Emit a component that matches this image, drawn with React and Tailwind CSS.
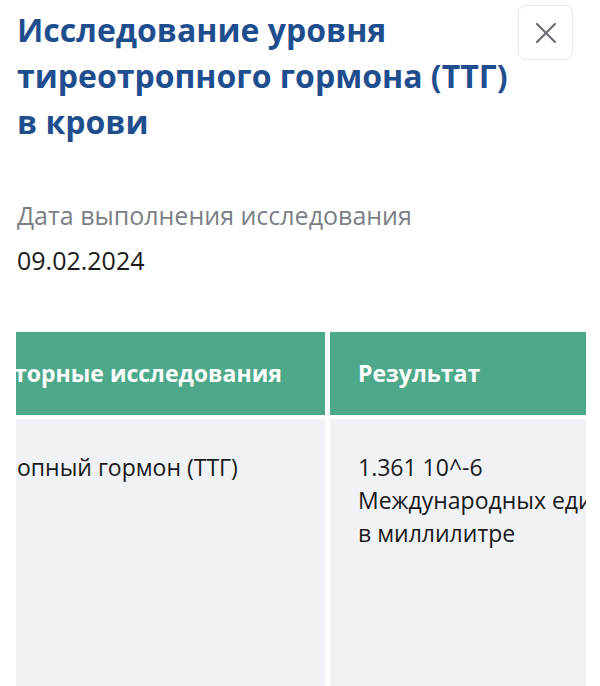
import React from 'react';

const App = () => {
  return (
    <div className="min-h-screen bg-white pl-4 pr-[14px] pt-[7px] overflow-hidden" style={{ fontFamily: '"Open Sans", sans-serif' }}>
      <div className="flex items-start justify-between">
        <h1 className="text-[32px] leading-[46px] font-bold text-[#1f4e8f] pl-px">
          Исследование уровня<br />тиреотропного гормона (ТТГ)<br />в крови
        </h1>
        <button className="w-[55px] h-[55px] -mt-[2px] mr-[13px] shrink-0 rounded-lg border border-gray-200 flex items-center justify-center">
          <svg width="24" height="24" viewBox="0 0 24 24" fill="none" stroke="#6b6e73" strokeWidth="2.2" strokeLinecap="round">
            <path d="M3 3L21 21M21 3L3 21" />
          </svg>
        </button>
      </div>

      <div className="mt-[54px] pl-px">
        <p className="text-[25px] leading-[33px] text-[#7b7f87]">Дата выполнения исследования</p>
        <p className="text-[25px] leading-[33px] text-[#1a1a1a] mt-[12px]">09.02.2024</p>
      </div>

      <div className="mt-[55px] overflow-hidden">
        <div className="flex flex-col gap-[4px] -ml-[120px] w-[760px]">
          <div className="flex gap-[5px]">
            <div className="w-[429px] h-[83px] bg-[#4ea98a] flex items-center pl-[30px] text-white font-bold text-[23px]">
              Лабораторные исследования
            </div>
            <div className="flex-1 h-[83px] bg-[#4ea98a] flex items-center pl-[28px] text-white font-bold text-[23px]">
              Результат
            </div>
          </div>
          <div className="flex gap-[5px]">
            <div className="w-[429px] h-[300px] bg-[#f1f2f6] pl-[28px] pt-[32px] text-[23px] leading-[33px] text-[#1a1a1a]">
              Тиреотропный гормон (ТТГ)
            </div>
            <div className="flex-1 h-[300px] bg-[#f1f2f6] pl-[28px] pt-[32px] text-[23px] leading-[33px] text-[#1a1a1a]">
              1.361 10^-6<br />Международных единиц<br />в миллилитре
            </div>
          </div>
        </div>
      </div>
    </div>
  );
};

export default App;
